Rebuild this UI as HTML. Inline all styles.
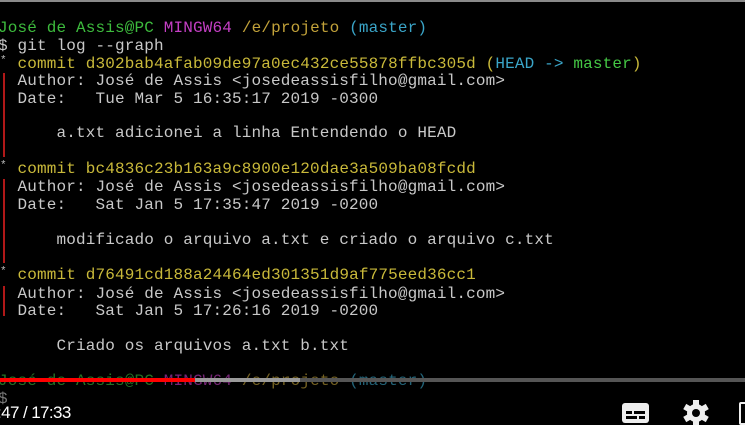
<!DOCTYPE html>
<html><head><meta charset="utf-8"><style>
html,body{margin:0;padding:0;background:#000;}
body{width:745px;height:425px;overflow:hidden;position:relative;font-family:"Liberation Mono",monospace;}
.topline{position:absolute;left:0;top:0;width:745px;height:2px;background:#8a8a8a;}
.l{position:absolute;left:-2px;font-size:16px;letter-spacing:0.15px;white-space:pre;color:#c8c8c8;line-height:18px;}
.g{color:#3dbb3d}.m{color:#c53fc5}.y{color:#c2a23a}.c{color:#3aa5c8}.cy{color:#c9b93a}.gr{color:#45c845}
.bar{position:absolute;left:3px;width:2px;background:#b01818;}
.star{position:absolute;left:0px;color:#bbb;font-size:11px;}
.fade{opacity:.6}
</style></head><body>
<div class="topline"></div>
<div class="l" style="top:19px"><span class="g">José de Assis@PC</span> <span class="m">MINGW64</span> <span class="y">/e/projeto</span> <span class="c">(master)</span></div>
<div class="l" style="top:37px">$ git log --graph</div>
<div class="l" style="top:55px">  <span class="cy">commit d302bab4afab09de97a0ec432ce55878ffbc305d (<span class="c">HEAD -&gt; </span><span class="gr">master</span>)</span></div>
<div class="l" style="top:72px">  Author: José de Assis &lt;josedeassisfilho@gmail.com&gt;</div>
<div class="l" style="top:90px">  Date:   Tue Mar 5 16:35:17 2019 -0300</div>
<div class="l" style="top:124px">      a.txt adicionei a linha Entendendo o HEAD</div>
<div class="l" style="top:160px">  <span class="cy">commit bc4836c23b163a9c8900e120dae3a509ba08fcdd</span></div>
<div class="l" style="top:178px">  Author: José de Assis &lt;josedeassisfilho@gmail.com&gt;</div>
<div class="l" style="top:196px">  Date:   Sat Jan 5 17:35:47 2019 -0200</div>
<div class="l" style="top:231px">      modificado o arquivo a.txt e criado o arquivo c.txt</div>
<div class="l" style="top:266px">  <span class="cy">commit d76491cd188a24464ed301351d9af775eed36cc1</span></div>
<div class="l" style="top:285px">  Author: José de Assis &lt;josedeassisfilho@gmail.com&gt;</div>
<div class="l" style="top:302px">  Date:   Sat Jan 5 17:26:16 2019 -0200</div>
<div class="l" style="top:337px">      Criado os arquivos a.txt b.txt</div>
<div class="l fade" style="top:372px"><span class="g">José de Assis@PC</span> <span class="m">MINGW64</span> <span class="y">/e/projeto</span> <span class="c">(master)</span></div>
<div class="l fade" style="top:390px">$</div>
<div class="star" style="top:55px">*</div><div class="star" style="top:160px">*</div><div class="star" style="top:266px">*</div>
<div class="bar" style="top:73px;height:84px"></div>
<div class="bar" style="top:179px;height:84px"></div>
<div class="bar" style="top:286px;height:30px"></div>
<div style="position:absolute;left:0;top:378px;width:745px;height:4px;background:#555"></div>
<div style="position:absolute;left:0;top:378px;width:300px;height:4px;background:#9a9a9a"></div>
<div style="position:absolute;left:0;top:378px;width:195px;height:4px;background:#f00"></div>
<div style="position:absolute;left:-3px;top:403px;color:#fff;font-family:'Liberation Sans',sans-serif;font-size:17px;letter-spacing:-0.6px">:47 / 17:33</div>
<svg style="position:absolute;left:620px;top:400px" width="32" height="25" viewBox="0 0 32 25"><rect x="2" y="3" width="27" height="20" rx="3" fill="#eee"/><rect x="6" y="11" width="6" height="3" fill="#000"/><rect x="14" y="11" width="11" height="3" fill="#000"/><rect x="6" y="16" width="11" height="3" fill="#000"/><rect x="19" y="16" width="6" height="3" fill="#000"/></svg>
<svg style="position:absolute;left:681px;top:399px" width="30" height="26" viewBox="0 0 30 26"><g fill="#eee" transform="translate(15,14)"><circle r="9"/><rect x="-3" y="-13" width="6" height="26"/><rect x="-3" y="-13" width="6" height="26" transform="rotate(60)"/><rect x="-3" y="-13" width="6" height="26" transform="rotate(120)"/></g><circle cx="15" cy="14" r="4" fill="#000"/></svg>
<div style="position:absolute;left:739px;top:402px;width:8px;height:23px;border:2px solid #eee;border-radius:2px;box-sizing:border-box"></div>
</body></html>
